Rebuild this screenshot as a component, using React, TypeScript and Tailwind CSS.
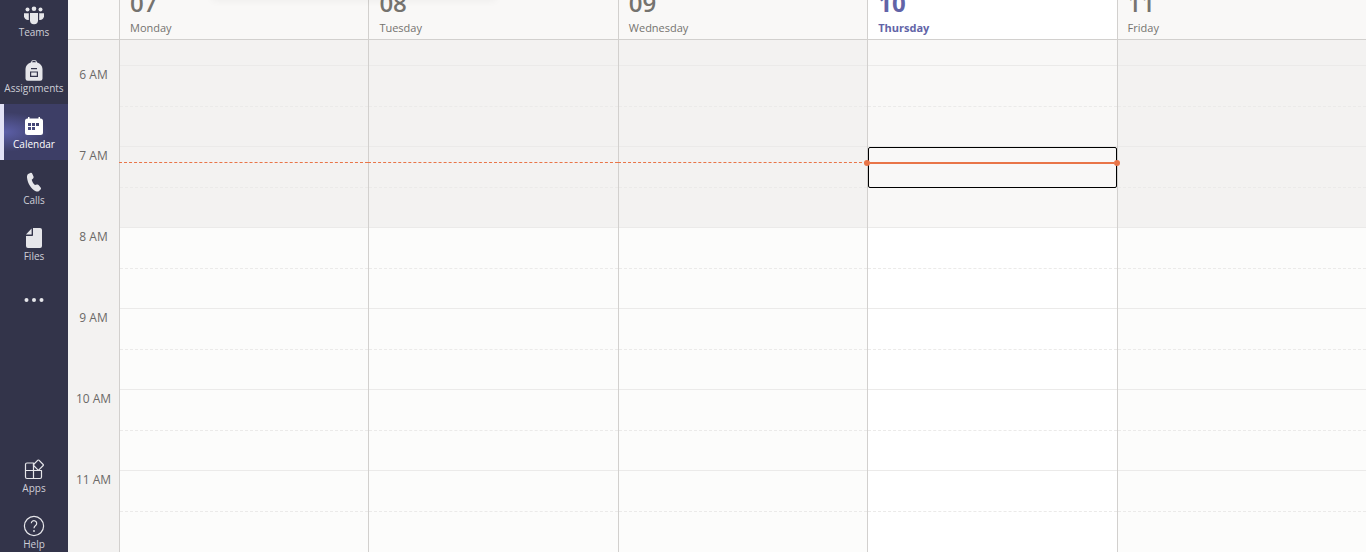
import type { ReactNode } from "react";
import clsx from "clsx";

type Day = { date: string; name: string; today?: boolean; past?: boolean };

const DAYS: Day[] = [
  { date: "07", name: "Monday", past: true },
  { date: "08", name: "Tuesday", past: true },
  { date: "09", name: "Wednesday", past: true },
  { date: "10", name: "Thursday", today: true },
  { date: "11", name: "Friday" },
];

const HOURS = ["6 AM", "7 AM", "8 AM", "9 AM", "10 AM", "11 AM"];

// Hours before this index fall outside the working day and are shaded.
const FIRST_WORK_HOUR = 2;

function Icon({ children }: { children: ReactNode }) {
  return (
    <svg viewBox="0 0 24 24" className="size-6" fill="currentColor" aria-hidden="true">
      {children}
    </svg>
  );
}

function TeamsIcon() {
  return (
    <Icon>
      <circle cx="5.500" cy="7.500" r="2" />
      <circle cx="12" cy="6.800" r="2.300" />
      <circle cx="18.500" cy="7.500" r="2" />
      <path d="M2 11.200h4.800V18A4.400 4.400 0 0 1 2 14.600z" />
      <path d="M8 11h8v7.200a4 4 0 0 1-8 0z" />
      <path d="M17.200 11.200H22v3.400a4.400 4.400 0 0 1-4.800 3.400z" />
    </Icon>
  );
}

function AssignmentsIcon() {
  return (
    <Icon>
      <path
        fillRule="evenodd"
        d="M8.800 4.600a3.300 3.300 0 0 1 6.400 0C18.500 5.600 20.300 8 20.500 11v9.500a2.200 2.200 0 0 1-2.200 2.200H5.700a2.200 2.200 0 0 1-2.200-2.200V11C3.700 8 5.500 5.600 8.800 4.600zM10 4.300h4a2.100 2.100 0 0 0-4 0zM9 10v1.200h6V10zM8 13.500v5.500h8v-5.500zM9.200 14.600h5.600v3.200H9.200z"
      />
    </Icon>
  );
}

function CalendarIcon() {
  return (
    <Icon>
      <path
        fillRule="evenodd"
        d="M6 3h1.500v1.500h9V3H18v1.500h.5A2.500 2.500 0 0 1 21 7v11.500a2.500 2.500 0 0 1-2.500 2.500h-13A2.500 2.500 0 0 1 3 18.500V7a2.500 2.500 0 0 1 2.500-2.500H6zM6 9v3h3V9zm4 0v3h3V9zm4 0v3h3V9zM6 13v3h3v-3zm4 0v3h3v-3z"
      />
    </Icon>
  );
}

function CallsIcon() {
  return (
    <Icon>
      <path d="M6.600 3.700 8.300 3c.9-.4 1.800 0 2.100.9l1.100 2.700c.3.700.1 1.400-.4 1.900l-1.400 1.300c.6 2 1.700 3.900 3.300 5.300l1.900-.5c.7-.2 1.400 0 1.900.6l1.800 2.200c.6.7.5 1.600-.1 2.200l-1.200 1.100c-.9.900-2.300 1.100-3.600.5C9.200 18.700 5.700 13.700 5 7.500c-.1-1.700.3-3.200 1.600-3.800z" />
    </Icon>
  );
}

function FilesIcon() {
  return (
    <Icon>
      <path d="M11 2h7a2 2 0 0 1 2 2v16a2 2 0 0 1-2 2H6a2 2 0 0 1-2-2V10h6.200a.8.800 0 0 0 .8-.8z" />
      <path d="M9.600 2.600v6H4z" />
    </Icon>
  );
}

function MoreIcon() {
  return (
    <Icon>
      <circle cx="4.500" cy="12" r="2" />
      <circle cx="12" cy="12" r="2" />
      <circle cx="19.500" cy="12" r="2" />
    </Icon>
  );
}

function AppsIcon() {
  return (
    <Icon>
      <g fill="none" stroke="currentColor" strokeWidth="1.200" strokeLinejoin="round">
        <path d="M11.500 12.500V5H5a1.500 1.500 0 0 0-1.500 1.500V19A1.500 1.500 0 0 0 5 20.500h13a1.500 1.500 0 0 0 1.500-1.500v-6.500h-16M11.500 5v15.500" />
        <path d="m16.900 2.200 4.300 4.300a.7.700 0 0 1 0 1l-4.300 4.300a.7.700 0 0 1-1 0l-4.300-4.300a.7.700 0 0 1 0-1l4.300-4.300a.7.700 0 0 1 1 0z" />
      </g>
    </Icon>
  );
}

function HelpIcon() {
  return (
    <Icon>
      <g fill="none" stroke="currentColor" strokeWidth="1.200">
        <circle cx="12" cy="12" r="9.600" />
        <path d="M9.300 9.300a2.700 2.700 0 1 1 4.300 2.200c-1 .8-1.600 1.300-1.600 2.700" />
      </g>
      <circle cx="12" cy="17" r=".9" />
    </Icon>
  );
}

function RailButton({
  label,
  icon,
  active,
  hideLabel,
}: {
  label: string;
  icon: ReactNode;
  active?: boolean;
  hideLabel?: boolean;
}) {
  return (
    <button
      type="button"
      aria-label={label}
      aria-current={active ? "page" : undefined}
      className={clsx(
        "flex h-14 w-full shrink-0 flex-col items-center justify-center text-[10px]",
        active
          ? "border-l-4 border-[#e2e2f6] bg-[#3d3e66] bg-radial-[at_0%_50%] from-[#5c5fa8] to-[#3d3e66] to-50% pr-1 text-white"
          : "text-[#e6e6ea]",
      )}
    >
      {icon}
      {!hideLabel && (
        <span className={clsx("h-3 leading-3", !active && "text-[#cfcfd8]")}>{label}</span>
      )}
    </button>
  );
}

function AppRail() {
  return (
    <nav className="flex w-17 shrink-0 flex-col bg-[#33344a]">
      <div className="-mt-2 flex flex-col">
        <RailButton label="Teams" icon={<TeamsIcon />} />
        <RailButton label="Assignments" icon={<AssignmentsIcon />} />
        <RailButton label="Calendar" icon={<CalendarIcon />} active />
        <RailButton label="Calls" icon={<CallsIcon />} />
        <RailButton label="Files" icon={<FilesIcon />} />
        <RailButton label="More" icon={<MoreIcon />} hideLabel />
      </div>
      <div className="-mb-2 mt-auto flex flex-col">
        <RailButton label="Apps" icon={<AppsIcon />} />
        <RailButton label="Help" icon={<HelpIcon />} />
      </div>
    </nav>
  );
}

function DayHeader({ day }: { day: Day }) {
  return (
    <div
      className={clsx(
        "flex flex-col border-l border-[#d2d0ce] pb-[3px] pl-2.5",
        day.today ? "bg-white text-[#6264a7]" : "text-[#75736f]",
      )}
    >
      <span className={clsx("text-2xl leading-[34px]", day.today ? "font-bold" : "font-semibold")}>
        {day.date}
      </span>
      <span className={clsx("text-[11px] leading-4", day.today && "font-bold")}>{day.name}</span>
    </div>
  );
}

/** Solid dot at either end of the current-time line. */
function NowDot() {
  return <span className="size-1.5 shrink-0 rounded-full bg-[#e97548]" />;
}

function DayColumn({ day }: { day: Day }) {
  const off = day.today ? "bg-[#f9f8f7]" : "bg-[#f3f2f1]";
  const work = day.today ? "bg-white" : "bg-[#fcfcfb]";
  return (
    <div className={clsx("relative border-l border-[#d2d0ce]", work)}>
      <div className={clsx("h-[25px]", off)} />
      {HOURS.map((hour, i) => (
        <div key={hour} className={i < FIRST_WORK_HOUR ? off : work}>
          <div className="h-[41px] border-t border-[#ebeae9]" />
          <div className="h-10 border-t border-dashed border-[#ebeae9]" />
        </div>
      ))}
      {day.today && (
        <>
          <div className="absolute inset-x-0 top-[107px] h-[41px] rounded-xs border border-black" />
          <div className="absolute -left-1 -right-[3px] top-[120px] z-10 flex items-center">
            <NowDot />
            <div className="h-0.5 flex-1 bg-[#e97548]" />
            <NowDot />
          </div>
        </>
      )}
      {day.past && (
        <div className="absolute right-0 -left-px top-[122px] border-t border-dashed border-[#e97548]" />
      )}
    </div>
  );
}

export default function App() {
  return (
    <div className="flex h-screen overflow-hidden bg-[#f3f2f1] font-['Open_Sans','Noto_Sans',sans-serif]">
      <AppRail />
      <main className="relative flex min-w-0 flex-1 flex-col overflow-hidden">
        {/* shadow cast by the toolbar above the week header */}
        <div className="absolute bottom-full left-36 h-2 w-71 shadow-[0_0_8px_rgba(0,0,0,0.06)]" />
        <header className="flex h-10 shrink-0 items-end overflow-hidden border-b border-[#d2d0ce] bg-[#f9f8f7]">
          <div className="w-[51px] shrink-0" />
          <div className="grid flex-1 grid-cols-5">
            {DAYS.map((day) => (
              <DayHeader key={day.name} day={day} />
            ))}
          </div>
        </header>
        <div className="flex min-h-0 flex-1 overflow-hidden">
          <div className="w-[51px] shrink-0 pt-[25px] text-center text-xs text-[#6b6967]">
            {HOURS.map((hour) => (
              <div key={hour} className="h-[81px] leading-5">
                {hour}
              </div>
            ))}
          </div>
          <div className="grid flex-1 grid-cols-5">
            {DAYS.map((day) => (
              <DayColumn key={day.name} day={day} />
            ))}
          </div>
        </div>
      </main>
    </div>
  );
}
